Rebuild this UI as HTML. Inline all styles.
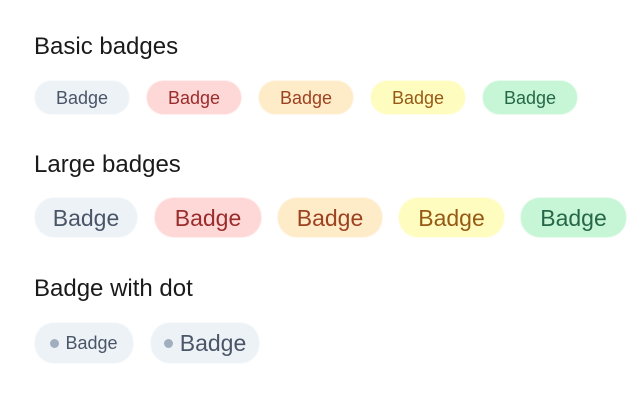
<!DOCTYPE html>
<html><head><style>
body{margin:0;width:640px;height:400px;background:#fff;font-family:"Liberation Sans",sans-serif;position:relative;overflow:hidden}
h2{position:absolute;left:34px;margin:0;font-weight:normal;font-size:24px;color:#1a1a1a}
.b{position:absolute;display:flex;align-items:center;justify-content:center;border-radius:20px;box-sizing:border-box;border:1px solid rgba(255,255,255,.6);padding-top:1px}
.s{height:35px;width:96px;font-size:18px}
.l{height:41px;font-size:23px}
.g{background:#edf2f7;color:#4a5568}
.r{background:#fed7d7;color:#9b2c2c}
.o{background:#feebc8;color:#9c4221}
.y{background:#fefcbf;color:#975a16}
.gr{background:#c6f6d5;color:#276749}
.d{width:9px;height:9px;border-radius:50%;background:#a0aec0;margin-right:7px}
</style></head><body>
<h2 style="top:33px">Basic badges</h2>
<div class="b s g" style="left:34px;top:80px">Badge</div>
<div class="b s r" style="left:146px;top:80px">Badge</div>
<div class="b s o" style="left:258px;top:80px">Badge</div>
<div class="b s y" style="left:370px;top:80px">Badge</div>
<div class="b s gr" style="left:482px;top:80px">Badge</div>
<h2 style="top:151px">Large badges</h2>
<div class="b l g" style="left:34px;top:197px;width:104px">Badge</div>
<div class="b l r" style="left:154px;top:197px;width:108px">Badge</div>
<div class="b l o" style="left:277px;top:197px;width:106px">Badge</div>
<div class="b l y" style="left:398px;top:197px;width:107px">Badge</div>
<div class="b l gr" style="left:520px;top:197px;width:107px">Badge</div>
<h2 style="top:275px">Badge with dot</h2>
<div class="b g" style="left:34px;top:322px;width:100px;height:42px;font-size:18px"><span class="d" style="margin-right:6px"></span>Badge</div>
<div class="b g" style="left:150px;top:322px;width:110px;height:42px;font-size:23px"><span class="d"></span>Badge</div>
</body></html>
